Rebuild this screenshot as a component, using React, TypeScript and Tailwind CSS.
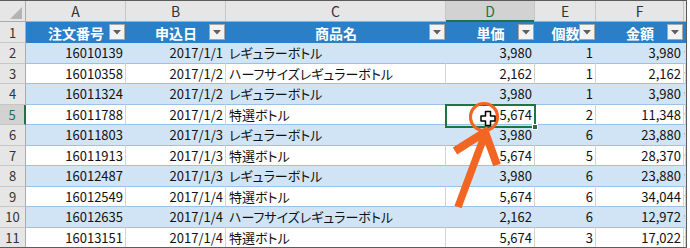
import React from "react";

type Row = {
  n: number;
  id: string;
  date: string;
  name: string;
  price: string;
  qty: string;
  total: string;
  extra: string;
};

const rows: Row[] = [
  { n: 2, id: "16010139", date: "2017/1/1", name: "レギュラーボトル", price: "3,980", qty: "1", total: "3,980", extra: "金" },
  { n: 3, id: "16010358", date: "2017/1/2", name: "ハーフサイズレギュラーボトル", price: "2,162", qty: "1", total: "2,162", extra: "会" },
  { n: 4, id: "16011324", date: "2017/1/2", name: "レギュラーボトル", price: "3,980", qty: "1", total: "3,980", extra: "会" },
  { n: 5, id: "16011788", date: "2017/1/2", name: "特選ボトル", price: "5,674", qty: "2", total: "11,348", extra: "会" },
  { n: 6, id: "16011803", date: "2017/1/3", name: "レギュラーボトル", price: "3,980", qty: "6", total: "23,880", extra: "会" },
  { n: 7, id: "16011913", date: "2017/1/3", name: "特選ボトル", price: "5,674", qty: "5", total: "28,370", extra: "会" },
  { n: 8, id: "16012487", date: "2017/1/3", name: "レギュラーボトル", price: "3,980", qty: "6", total: "23,880", extra: "会" },
  { n: 9, id: "16012549", date: "2017/1/4", name: "特選ボトル", price: "5,674", qty: "6", total: "34,044", extra: "金" },
  { n: 10, id: "16012635", date: "2017/1/4", name: "ハーフサイズレギュラーボトル", price: "2,162", qty: "6", total: "12,972", extra: "会" },
  { n: 11, id: "16013151", date: "2017/1/4", name: "特選ボトル", price: "5,674", qty: "3", total: "17,022", extra: "会" },
];

const widths = ["w-[100px]", "w-[100px]", "w-[220px]", "w-[89px]", "w-[61px]", "w-[88px]"];
const letters = ["A", "B", "C", "D", "E", "F"];
const headers = ["注文番号", "申込日", "商品名", "単価", "個数", "金額"];

function FilterButton() {
  return (
    <div className="absolute right-[1px] top-[2px] flex h-[16px] w-[16px] items-center justify-center border border-[#a6a6a6] bg-[#f3f3f3]">
      <svg width="8" height="5" viewBox="0 0 8 5">
        <path d="M0 0 H8 L4 4.5 Z" fill="#5f5f5f" />
      </svg>
    </div>
  );
}

function RowHeader({ n, selected }: { n: number; selected?: boolean }) {
  return (
    <div
      className={`flex w-[26px] shrink-0 items-center justify-center border-b border-[#c6c6c6] ${
        selected
          ? "border-r-2 border-r-[#217346] bg-[#d2d2d2] text-[#217346]"
          : "border-r border-r-[#ababab] bg-[#e6e6e6] text-[#333]"
      }`}
    >
      {n}
    </div>
  );
}

export default function App() {
  return (
    <div className="h-[248px] w-[690px] overflow-hidden bg-white font-['Noto_Sans_CJK_JP',sans-serif] text-[13px] leading-none text-[#111]">
      <div className="relative h-[248px] w-[687px] overflow-hidden border-y border-r border-[#5c5c5c]">
        {/* column letters */}
        <div className="flex h-[21px] border-b border-[#ababab] bg-[#e6e6e6] text-[14px] text-[#333]">
          <div className="relative w-[26px] shrink-0 border-r border-[#ababab]">
            <svg className="absolute bottom-[2px] right-[3px]" width="12" height="12" viewBox="0 0 12 12">
              <path d="M12 0 V12 H0 Z" fill="#b4b4b4" />
            </svg>
          </div>
          {letters.map((l, i) => (
            <div
              key={l}
              className={`${widths[i]} flex shrink-0 items-center justify-center border-r border-[#c6c6c6] ${
                l === "D" ? "relative bg-[#d2d2d2] text-[#217346]" : ""
              }`}
            >
              {l}
              {l === "D" && <div className="absolute bottom-[-1px] left-0 right-0 h-[2px] bg-[#217346]" />}
            </div>
          ))}
          <div className="flex-1" />
        </div>

        {/* table header row */}
        <div className="flex h-[21px]">
          <RowHeader n={1} />
          {headers.map((h, i) => (
            <div
              key={h}
              className={`${widths[i]} relative flex shrink-0 items-center justify-center bg-[#2a7fc6] text-[14px] font-bold text-white`}
            >
              {h}
              <FilterButton />
            </div>
          ))}
          <div className="flex-1 bg-[#2a7fc6]" />
        </div>

        {rows.map((r) => {
          const blue = r.n % 2 === 0;
          const cell = `shrink-0 flex items-center border-b border-b-[#9bc2e6] border-r ${
            blue ? "bg-[#d0e4f5] border-r-[#d0e4f5]" : "bg-white border-r-[#d4d4d4]"
          }`;
          return (
            <div key={r.n} className="flex h-[20.5px]">
              <RowHeader n={r.n} selected={r.n === 5} />
              <div className={`${cell} ${widths[0]} justify-end pr-[2px]`}>{r.id}</div>
              <div className={`${cell} ${widths[1]} justify-end pr-[2px]`}>{r.date}</div>
              <div className={`${cell} ${widths[2]} pl-[3px] [font-feature-settings:'palt']`}>{r.name}</div>
              <div className={`${cell} ${widths[3]} justify-end pr-[2px]`}>{r.price}</div>
              <div className={`${cell} ${widths[4]} justify-end pr-[2px]`}>{r.qty}</div>
              <div className={`${cell} ${widths[5]} justify-end pr-[2px]`}>{r.total}</div>
              <div className={`${cell} flex-1 overflow-hidden whitespace-nowrap`}>{r.extra}</div>
            </div>
          );
        })}

        {/* active cell D5 */}
        <div className="absolute left-[445px] top-[103px] h-[24px] w-[91px] border-2 border-[#217346]">
          <div className="absolute bottom-[-4px] right-[-4px] h-[6px] w-[6px] border border-white bg-[#217346]" />
        </div>

        {/* annotation */}
        <svg className="pointer-events-none absolute left-0 top-0" width="690" height="248" viewBox="0 0 690 248">
          <circle cx="484" cy="116" r="13.5" fill="none" stroke="#f26522" strokeWidth="3.2" />
          <path
            d="M485.5 110.5 h5 v4.5 h4.5 v5 h-4.5 v4.5 h-5 v-4.5 h-4.5 v-5 h4.5 z"
            fill="white"
            stroke="black"
            strokeWidth="1.5"
            strokeLinejoin="round"
          />
          <line x1="458" y1="206" x2="484" y2="136" stroke="#f26522" strokeWidth="7.5" />
          <polyline
            points="455,150 485,131 497,164"
            fill="none"
            stroke="#f26522"
            strokeWidth="8"
            strokeLinejoin="miter"
          />
        </svg>
      </div>
    </div>
  );
}
